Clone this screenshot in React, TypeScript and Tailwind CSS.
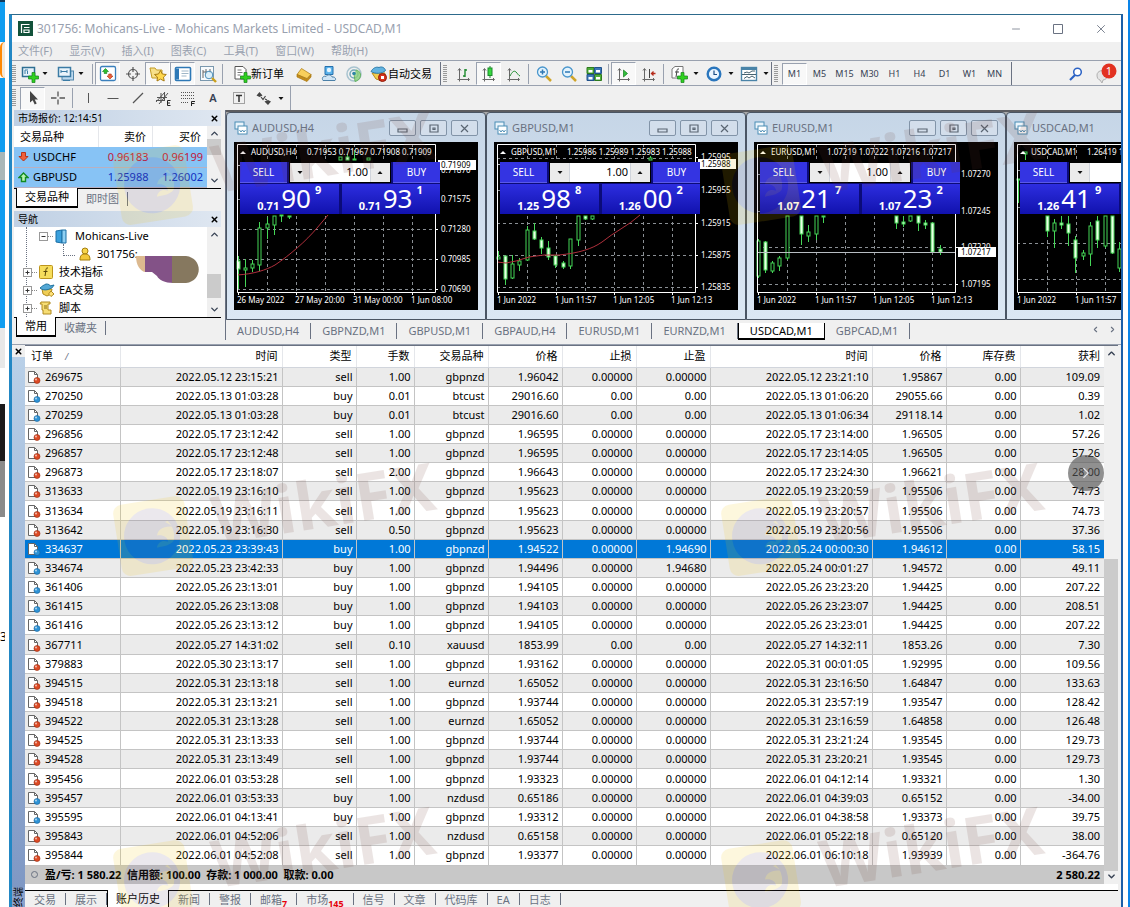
import type { ReactNode } from "react";
import { ChevronDown, ChevronLeft, ChevronRight, ChevronUp, Minus, Square, X } from "lucide-react";
import clsx from "clsx";

const menus = ["文件(F)", "显示(V)", "插入(I)", "图表(C)", "工具(T)", "窗口(W)", "帮助(H)"];
const periods = ["M1", "M5", "M15", "M30", "H1", "H4", "D1", "W1", "MN"];
const chartTabs = ["AUDUSD,H4", "GBPNZD,M1", "GBPUSD,M1", "GBPAUD,H4", "EURUSD,M1", "EURNZD,M1", "USDCAD,M1", "GBPCAD,M1"];

const terminalTabs: { name: string; count?: string }[] = [
  { name: "交易" },
  { name: "展示" },
  { name: "账户历史" },
  { name: "新闻" },
  { name: "警报" },
  { name: "邮箱", count: "7" },
  { name: "市场", count: "145" },
  { name: "信号" },
  { name: "文章" },
  { name: "代码库" },
  { name: "EA" },
  { name: "日志" },
];

const columns = ["订单", "时间", "类型", "手数", "交易品种", "价格", "止损", "止盈", "时间", "价格", "库存费", "获利"];

// order, open time, type, lots, symbol, price, s/l, t/p, close time, price, swap, profit
const orders = [
  ["269675", "2022.05.12 23:15:21", "sell", "1.00", "gbpnzd", "1.96042", "0.00000", "0.00000", "2022.05.12 23:21:10", "1.95867", "0.00", "109.09"],
  ["270250", "2022.05.13 01:03:28", "buy", "0.01", "btcust", "29016.60", "0.00", "0.00", "2022.05.13 01:06:20", "29055.66", "0.00", "0.39"],
  ["270259", "2022.05.13 01:03:28", "buy", "0.01", "btcust", "29016.60", "0.00", "0.00", "2022.05.13 01:06:34", "29118.14", "0.00", "1.02"],
  ["296856", "2022.05.17 23:12:42", "sell", "1.00", "gbpnzd", "1.96595", "0.00000", "0.00000", "2022.05.17 23:14:00", "1.96505", "0.00", "57.26"],
  ["296857", "2022.05.17 23:12:48", "sell", "1.00", "gbpnzd", "1.96595", "0.00000", "0.00000", "2022.05.17 23:14:05", "1.96505", "0.00", "57.26"],
  ["296873", "2022.05.17 23:18:07", "sell", "2.00", "gbpnzd", "1.96643", "0.00000", "0.00000", "2022.05.17 23:24:30", "1.96621", "0.00", "28.00"],
  ["313633", "2022.05.19 23:16:10", "sell", "1.00", "gbpnzd", "1.95623", "0.00000", "0.00000", "2022.05.19 23:20:59", "1.95506", "0.00", "74.73"],
  ["313634", "2022.05.19 23:16:11", "sell", "1.00", "gbpnzd", "1.95623", "0.00000", "0.00000", "2022.05.19 23:20:57", "1.95506", "0.00", "74.73"],
  ["313642", "2022.05.19 23:16:30", "sell", "0.50", "gbpnzd", "1.95623", "0.00000", "0.00000", "2022.05.19 23:20:56", "1.95506", "0.00", "37.36"],
  ["334637", "2022.05.23 23:39:43", "buy", "1.00", "gbpnzd", "1.94522", "0.00000", "1.94690", "2022.05.24 00:00:30", "1.94612", "0.00", "58.15"],
  ["334674", "2022.05.23 23:42:33", "buy", "1.00", "gbpnzd", "1.94496", "0.00000", "1.94680", "2022.05.24 00:01:27", "1.94572", "0.00", "49.11"],
  ["361406", "2022.05.26 23:13:01", "buy", "1.00", "gbpnzd", "1.94105", "0.00000", "0.00000", "2022.05.26 23:23:20", "1.94425", "0.00", "207.22"],
  ["361415", "2022.05.26 23:13:08", "buy", "1.00", "gbpnzd", "1.94103", "0.00000", "0.00000", "2022.05.26 23:23:07", "1.94425", "0.00", "208.51"],
  ["361416", "2022.05.26 23:13:12", "buy", "1.00", "gbpnzd", "1.94105", "0.00000", "0.00000", "2022.05.26 23:23:01", "1.94425", "0.00", "207.22"],
  ["367711", "2022.05.27 14:31:02", "sell", "0.10", "xauusd", "1853.99", "0.00", "0.00", "2022.05.27 14:32:11", "1853.26", "0.00", "7.30"],
  ["379883", "2022.05.30 23:13:17", "sell", "1.00", "gbpnzd", "1.93162", "0.00000", "0.00000", "2022.05.31 00:01:05", "1.92995", "0.00", "109.56"],
  ["394515", "2022.05.31 23:13:18", "sell", "1.00", "eurnzd", "1.65052", "0.00000", "0.00000", "2022.05.31 23:16:50", "1.64847", "0.00", "133.63"],
  ["394518", "2022.05.31 23:13:21", "sell", "1.00", "gbpnzd", "1.93744", "0.00000", "0.00000", "2022.05.31 23:57:19", "1.93547", "0.00", "128.42"],
  ["394522", "2022.05.31 23:13:28", "sell", "1.00", "eurnzd", "1.65052", "0.00000", "0.00000", "2022.05.31 23:16:59", "1.64858", "0.00", "126.48"],
  ["394525", "2022.05.31 23:13:33", "sell", "1.00", "gbpnzd", "1.93744", "0.00000", "0.00000", "2022.05.31 23:21:24", "1.93545", "0.00", "129.73"],
  ["394528", "2022.05.31 23:13:49", "sell", "1.00", "gbpnzd", "1.93744", "0.00000", "0.00000", "2022.05.31 23:20:21", "1.93545", "0.00", "129.73"],
  ["395456", "2022.06.01 03:53:28", "sell", "1.00", "gbpnzd", "1.93323", "0.00000", "0.00000", "2022.06.01 04:12:14", "1.93321", "0.00", "1.30"],
  ["395457", "2022.06.01 03:53:33", "buy", "1.00", "nzdusd", "0.65186", "0.00000", "0.00000", "2022.06.01 04:39:03", "0.65152", "0.00", "-34.00"],
  ["395595", "2022.06.01 04:13:41", "buy", "1.00", "gbpnzd", "1.93312", "0.00000", "0.00000", "2022.06.01 04:38:58", "1.93373", "0.00", "39.75"],
  ["395843", "2022.06.01 04:52:06", "sell", "1.00", "nzdusd", "0.65158", "0.00000", "0.00000", "2022.06.01 05:22:18", "0.65120", "0.00", "38.00"],
  ["395844", "2022.06.01 04:52:08", "sell", "1.00", "gbpnzd", "1.93377", "0.00000", "0.00000", "2022.06.01 06:10:18", "1.93939", "0.00", "-364.76"],
];

// x, high, low, body top, body bottom, filled
type Candle = [number, number, number, number, number, boolean];

type Chart = {
  name: string;
  quotes: string;
  sell: [string, string, string];
  buy: [string, string, string];
  grid: number[];
  labels: [number, string][];
  dates: string[];
  last?: [number, string];
  ma?: string;
  candles: Candle[];
};

const charts: Chart[] = [
  {
    name: "AUDUSD,H4",
    quotes: "0.71953 0.71967 0.71908 0.71909",
    sell: ["0.71", "90", "9"],
    buy: ["0.71", "93", "1"],
    grid: [57, 87, 117, 147],
    labels: [[28, "0.71870"], [57, "0.71575"], [87, "0.71280"], [117, "0.70985"], [147, "0.70690"]],
    dates: ["26 May 2022", "27 May 20:00", "31 May 00:00", "1 Jun 08:00"],
    last: [23, "0.71909"],
    ma: "M3 133C20 132 32 128 41 123C56 113 72 99 83 86L94 73",
    candles: [
      [4, 114, 147, 119, 127, true],
      [11, 117, 145, 126, 128, false],
      [18, 118, 130, 122, 126, false],
      [25, 80, 129, 86, 123, false],
      [33, 75, 97, 82, 86, false],
      [40, 74, 93, 74, 83, false],
      [47, 74, 80, 73, 74, false],
      [55, 74, 77, 74, 75, false],
      [106, 15, 18, 15, 18, false],
      [113, 12, 18, 15, 18, true],
      [120, 9, 18, 17, 18, false],
      [134, 16, 18, 16, 18, false],
    ],
  },
  {
    name: "GBPUSD,M1",
    quotes: "1.25986 1.25989 1.25983 1.25988",
    sell: ["1.25", "98", "8"],
    buy: ["1.26", "00", "2"],
    grid: [16, 48, 81, 113, 145],
    labels: [[15, "1.25995"], [48, "1.25955"], [81, "1.25915"], [113, "1.25875"], [145, "1.25835"]],
    dates: ["1 Jun 2022", "1 Jun 11:57", "1 Jun 12:05", "1 Jun 12:13"],
    last: [22, "1.25988"],
    ma: "M3 120L12 121L22 119L35 115L50 113L65 113C85 111 98 107 108 100C120 90 134 84 146 73",
    candles: [
      [4, 109, 117, 115, 117, false],
      [11, 114, 143, 114, 137, true],
      [18, 113, 137, 122, 136, false],
      [25, 116, 129, 119, 123, false],
      [33, 84, 119, 88, 118, false],
      [40, 81, 98, 89, 97, true],
      [47, 95, 112, 98, 106, true],
      [54, 99, 118, 106, 115, true],
      [61, 113, 126, 114, 123, true],
      [69, 119, 127, 121, 125, true],
      [76, 97, 127, 97, 124, false],
      [84, 74, 104, 74, 98, false],
      [91, 74, 78, 74, 77, true],
      [98, 74, 78, 74, 77, false],
      [156, 14, 18, 16, 18, false],
    ],
  },
  {
    name: "EURUSD,M1",
    quotes: "1.07219 1.07222 1.07216 1.07217",
    sell: ["1.07", "21", "7"],
    buy: ["1.07", "23", "2"],
    grid: [32, 69, 105, 142],
    labels: [[32, "1.07270"], [69, "1.07245"], [105, "1.07220"], [142, "1.07195"]],
    dates: ["1 Jun 2022", "1 Jun 11:57", "1 Jun 12:05", "1 Jun 12:13"],
    last: [110, "1.07217"],
    candles: [
      [4, 97, 136, 99, 134, false],
      [11, 99, 131, 100, 128, true],
      [18, 119, 131, 121, 129, false],
      [25, 114, 129, 116, 124, false],
      [33, 74, 118, 74, 116, false],
      [47, 74, 103, 74, 92, true],
      [54, 83, 100, 90, 94, false],
      [62, 74, 98, 74, 92, false],
      [69, 74, 81, 74, 75, false],
      [142, 74, 87, 74, 81, true],
      [149, 74, 85, 80, 82, true],
      [156, 74, 80, 74, 79, false],
      [164, 74, 89, 74, 81, true],
      [171, 78, 87, 81, 83, true],
      [178, 80, 110, 81, 110, true],
      [186, 103, 113, 107, 110, true],
    ],
  },
  {
    name: "USDCAD,M1",
    quotes: "1.26419 1.26421 1.26417 1.26419",
    sell: ["1.26", "41", "9"],
    buy: ["1.26", "44", "1"],
    grid: [28, 65, 101, 137],
    labels: [[28, "1.26440"], [65, "1.26425"], [101, "1.26410"], [137, "1.26395"]],
    dates: ["1 Jun 2022", "1 Jun 11:57", "1 Jun 12:05", "1 Jun 12:13"],
    candles: [
      [4, 37, 61, 37, 38, false],
      [11, 10, 18, 10, 12, false],
      [33, 74, 95, 74, 89, true],
      [40, 77, 106, 81, 89, false],
      [47, 74, 87, 81, 83, true],
      [54, 74, 104, 82, 91, true],
      [61, 94, 131, 98, 116, true],
      [69, 108, 118, 111, 114, false],
      [76, 80, 124, 84, 112, false],
      [83, 74, 106, 79, 98, true],
      [91, 74, 106, 74, 104, false],
      [98, 74, 112, 74, 111, true],
      [105, 100, 130, 107, 126, false],
    ],
  },
];

function Icon({ children }: { children: ReactNode }) {
  return (
    <svg width="18" height="18" viewBox="0 0 18 18" fill="none" aria-hidden="true">
      {children}
    </svg>
  );
}

const plus = <path d="M11 7.500h3v3.500h3.500v3h-3.500v3.500h-3v-3.500h-3.500v-3h3.500z" fill="#2fd01f" stroke="#13801a" strokeWidth=".7" />;
const axes = <path d="M4.500 4v10.500H14M2.500 14.500h2v2M3 5.500l1.500-2 1.500 2M13 13l1.500 1.500L13 16" stroke="#666" />;

const icons = {
  addChart: (
    <Icon>
      <rect x="1.500" y="2.500" width="12" height="9" fill="#e8f3fb" stroke="#2f6f93" strokeWidth="1.500" />
      <path d="M4 5v4M6.500 6v3M4 5h3" stroke="#3a7fa6" />
      {plus}
    </Icon>
  ),
  profiles: (
    <Icon>
      <rect x="5" y="6" width="11.500" height="9" fill="#bcd8ee" stroke="#5387ab" />
      <rect x="1.500" y="2.500" width="12" height="9" fill="#eaf4fb" stroke="#3b7ba5" strokeWidth="1.500" />
      <path d="M4 5v3M4 6.500h6M10 5v3M6 15.500h7" stroke="#3b7ba5" />
    </Icon>
  ),
  market: (
    <Icon>
      <rect x="1.500" y="1.500" width="15" height="14" rx="1.500" fill="#fff" stroke="#3a80bd" strokeWidth="1.300" />
      <path d="M6.500 3.500l3 3h-1.700v2H5.200v-2H3.500z" fill="#2bc02b" stroke="#13801a" strokeWidth=".6" />
      <path d="M11 14l-3-3h1.700V9h2.600v2H14z" fill="#f0603a" stroke="#a83213" strokeWidth=".6" />
    </Icon>
  ),
  crosshair: (
    <Icon>
      <circle cx="9" cy="9" r="4.500" stroke="#555" strokeWidth="1.200" />
      <path d="M9 2v5M9 11v5M2 9h5M11 9h5" stroke="#555" strokeWidth="1.200" />
    </Icon>
  ),
  navigator: (
    <Icon>
      <path d="M1 3h5l1.500 2H13v8H3z" fill="#f7e08a" stroke="#c29b25" />
      <path d="M11.500 5.500l1.800 3.500 4 .5-2.800 2.600.7 3.900-3.700-1.900-3.500 1.900.5-3.900L5.500 9.500l4-.5z" fill="#ffd84d" stroke="#a87b11" />
    </Icon>
  ),
  list: (
    <Icon>
      <rect x="1.500" y="2.500" width="15" height="13" rx="1" fill="#fff" stroke="#2d78b6" strokeWidth="1.600" />
      <path d="M2 3.500h3v11H2z" fill="#2d78b6" />
      <path d="M7.500 6h7M7.500 8.500h7M7.500 11h5" stroke="#9fb6c8" />
    </Icon>
  ),
  tester: (
    <Icon>
      <rect x="1.500" y="1.500" width="13" height="14" fill="#f7fafc" stroke="#7a98ae" />
      <path d="M4 13V5M7 9V4M4 7h4M11 8V4" stroke="#666" />
      <circle cx="10" cy="10" r="3.800" fill="#d5edf9" fillOpacity=".8" stroke="#4a8db8" />
      <path d="M13 13l4 4" stroke="#caa01c" strokeWidth="2.400" />
    </Icon>
  ),
  newOrder: (
    <Icon>
      <path d="M2 1.500h8l3 3V14H2z" fill="#fff" stroke="#555" />
      <path d="M4.500 5h4M4.500 7.500h5M4.500 10h3" stroke="#777" />
      {plus}
    </Icon>
  ),
  gold: (
    <Icon>
      <path d="M2 9.500L6.500 3.500l9.500 6-4 4z" fill="#f8cf5c" stroke="#a7770f" strokeWidth=".7" />
      <path d="M2 9.500l10 4.500 4-4.500v2.500l-4 4.500-10-4.500z" fill="#c48c1b" stroke="#a7770f" strokeWidth=".7" />
    </Icon>
  ),
  community: (
    <Icon>
      <path d="M5 1.500h8v8H5z" fill="#5bb2ea" stroke="#2571ae" />
      <circle cx="9" cy="5" r="2.200" fill="#e6f5ff" />
      <path d="M3 15.500c-2-3 1-5 3-4 1.500-2.500 5.500-2 6 .5 3-.5 4.500 2 3 3.500z" fill="#cfe4f4" stroke="#4b80a8" />
    </Icon>
  ),
  signals: (
    <Icon>
      <circle cx="9" cy="9" r="7" stroke="#a8c3cf" strokeWidth="1.500" />
      <circle cx="9" cy="9" r="4" stroke="#73a9b8" strokeWidth="1.500" />
      <path d="M9 9l1 7.500c4-1 6-4 5.500-7.500-1-3-3-4-4.500-4" fill="#8ad17a" fillOpacity=".8" stroke="#4da746" strokeWidth=".7" />
      <circle cx="9" cy="8.500" r="1.800" fill="#2e86a5" />
    </Icon>
  ),
  auto: (
    <Icon>
      <path d="M2 8h13l-3 8-6-2z" fill="#f3cc4d" stroke="#b58c1b" />
      <path d="M1 6.500C3 3 6 1.500 9 2.500c3-1.500 6 .5 6.500 3C12 9 5 9 1 6.500z" fill="#62b3e0" stroke="#2a7bab" />
      <circle cx="12.500" cy="12.500" r="4" fill="#d6321c" stroke="#8f1c0d" />
      <rect x="11" y="11" width="3" height="3" fill="#fff" />
    </Icon>
  ),
  bars: (
    <Icon>
      {axes}
      <path d="M10 4v8M8 11h2M10 5h2" stroke="#1d8a2d" strokeWidth="1.400" />
    </Icon>
  ),
  candles: (
    <Icon>
      {axes}
      <path d="M10 1v12" stroke="#1d8a2d" />
      <rect x="8" y="3" width="4" height="7.500" fill="#37d83e" stroke="#1d8a2d" />
    </Icon>
  ),
  line: (
    <Icon>
      {axes}
      <path d="M5 11C7 7 9 5 11 7s2 3 4 4" stroke="#1d8a2d" />
    </Icon>
  ),
  zoomIn: (
    <Icon>
      <path d="M11 11l5 5" stroke="#d0a52a" strokeWidth="2.500" />
      <circle cx="7.500" cy="7" r="5" fill="#e3f3fd" stroke="#4a96cc" strokeWidth="1.300" />
      <path d="M7.500 4.500v5M5 7h5" stroke="#2e78b5" strokeWidth="1.500" />
    </Icon>
  ),
  zoomOut: (
    <Icon>
      <path d="M11 11l5 5" stroke="#d0a52a" strokeWidth="2.500" />
      <circle cx="7.500" cy="7" r="5" fill="#e3f3fd" stroke="#4a96cc" strokeWidth="1.300" />
      <path d="M5 7h5" stroke="#2e78b5" strokeWidth="1.500" />
    </Icon>
  ),
  tile: (
    <Icon>
      <path d="M2 2.500h7v6H2zM9.500 9.500h7v6h-7z" fill="#4fae3b" stroke="#2c7a1e" />
      <path d="M9.500 2.500h7v6h-7zM2 9.500h7v6H2z" fill="#3c78b8" stroke="#20518a" />
      <path d="M3.500 5h4v2.500h-4zM11 5h4v2.500h-4zM3.500 12h4v2.500h-4zM11 12h4v2.500h-4z" fill="#fff" />
    </Icon>
  ),
  scroll: (
    <Icon>
      {axes}
      <path d="M8.500 5l4 3.500-4 3.500z" fill="#2fbf3a" stroke="#137a1c" strokeWidth=".7" />
    </Icon>
  ),
  shift: (
    <Icon>
      {axes}
      <path d="M9.500 4v9" stroke="#444" />
      <path d="M15.500 8.500h-4M13.500 6.500l-2 2 2 2" stroke="#b52a1a" strokeWidth="1.300" />
    </Icon>
  ),
  indicators: (
    <Icon>
      <path d="M2 4l3-2.500h8V13H2z" fill="#fff" stroke="#777" />
      <path d="M9 4c-2-.5-2 1-2.200 3L6 12M5 7h4" stroke="#444" />
      {plus}
    </Icon>
  ),
  clock: (
    <Icon>
      <circle cx="9" cy="9" r="6.300" fill="#eaf5ff" stroke="#2a76bd" strokeWidth="2.400" />
      <path d="M9 5.500v4h3" stroke="#1a4d85" strokeWidth="1.200" />
    </Icon>
  ),
  template: (
    <Icon>
      <rect x="1.500" y="2.500" width="15" height="13" fill="#fff" stroke="#4a84a8" strokeWidth="1.400" />
      <path d="M2 4h14" stroke="#4a84a8" strokeWidth="2" />
      <path d="M4 8l3-1 2 1 3-2h3M4 13.500l3-2 2 1.500 3-2 3 2M2 9.500h14" stroke="#45616f" />
    </Icon>
  ),
  cursor: (
    <Icon>
      <path d="M6 2v11.500l2.700-2.300 2 4.300 2-1-2-4H14z" fill="#444" />
    </Icon>
  ),
  cross: (
    <Icon>
      <path d="M9 2.500v5M9 10.500v5M2 9h5.500M10.500 9H16" stroke="#555" strokeWidth="1.300" />
    </Icon>
  ),
  vline: (
    <Icon>
      <path d="M9.500 4v10" stroke="#555" />
    </Icon>
  ),
  hline: (
    <Icon>
      <path d="M3.500 9.500h11" stroke="#555" />
    </Icon>
  ),
  trend: (
    <Icon>
      <path d="M4 14L14 4" stroke="#555" strokeWidth="1.200" />
    </Icon>
  ),
  channel: (
    <Icon>
      <path d="M2 13L11 3M5 15l9-11M3 8.500h10M2 11.500h9M7 4v10M10.500 3v8" stroke="#555" />
      <path d="M16.500 11.500h-3v5h3M13.500 14h2.500" stroke="#222" />
    </Icon>
  ),
  fibo: (
    <Icon>
      <path d="M2 3.500h13M2 6.500h13M2 9.500h13M2 13.500h8" stroke="#555" strokeDasharray="1 1" />
      <path d="M16 12.500h-3.500V17M12.500 14.500h3" stroke="#222" />
    </Icon>
  ),
  label: (
    <Icon>
      <rect x="3.500" y="3.500" width="11" height="11" stroke="#555" strokeDasharray="1 1" />
      <path d="M6 6.500h6M9 6.500V13" stroke="#333" strokeWidth="1.500" />
    </Icon>
  ),
  arrows: (
    <Icon>
      <path d="M1.500 6.500l3-3.500 3 3.500-3 1.500zM9.500 12.500l3.500-1.500 3 1.500-3 3.500z" fill="#444" />
      <path d="M6 8l2 2.500 2.500-3.500M10 10l2 1" stroke="#444" strokeWidth="1.200" />
    </Icon>
  ),
};

function Tool({ name, pressed, narrow }: { name: keyof typeof icons; pressed?: boolean; narrow?: boolean }) {
  return (
    <button
      type="button"
      aria-label={name}
      className={clsx(
        "flex h-[23px] shrink-0 items-center justify-center",
        narrow ? "w-5" : "w-[25px]",
        pressed && "border border-r-white border-b-white border-t-gray-400 border-l-gray-400 bg-[#f8f8f8]"
      )}
    >
      {icons[name]}
    </button>
  );
}

function Caret() {
  return (
    <svg width="10" height="5" viewBox="0 0 10 5" className="shrink-0" aria-hidden="true">
      <path d="M2.500 1h5L5 4z" fill="#111" />
    </svg>
  );
}

function Divider() {
  return <div className="mx-0.5 h-5 w-px shrink-0 bg-gray-400" />;
}

function Grip() {
  return <div className="mr-1 h-[18px] w-1 shrink-0 bg-[repeating-linear-gradient(#9a9a9a_0_1px,#f0f0f0_1px_2px)]" />;
}

function CloseButton() {
  return (
    <button type="button" aria-label="关闭" className="text-black">
      <X size={9} strokeWidth={4} />
    </button>
  );
}

function Toolbars() {
  return (
    <div className="bg-[#f0f0f0]">
      <div className="flex h-[25px] items-center border-b border-gray-400 pt-px">
        <div className="flex h-full shrink-0 items-center border-r border-gray-500 pr-2">
          <Grip />
          <Tool name="addChart" narrow />
          <Caret />
          <div className="w-1.5" />
          <Tool name="profiles" narrow />
          <Caret />
          <div className="w-1" />
          <Divider />
          <Tool name="market" pressed />
          <Tool name="crosshair" />
          <Tool name="navigator" pressed />
          <Tool name="list" pressed />
          <Tool name="tester" />
          <Divider />
          <button type="button" className="ml-2 flex w-[58px] shrink-0 items-center text-[11px] leading-4">
            {icons.newOrder}
            新订单
          </button>
          <Tool name="gold" />
          <Tool name="community" />
          <Tool name="signals" />
          <button type="button" className="ml-1 flex shrink-0 items-center text-[11px] leading-4">
            {icons.auto}
            自动交易
          </button>
        </div>
        <div className="flex h-full shrink-0 items-center border-r border-gray-500 pl-0.5">
          <Grip />
          <Tool name="bars" />
          <Tool name="candles" pressed />
          <Tool name="line" />
          <Divider />
          <Tool name="zoomIn" />
          <Tool name="zoomOut" />
          <Tool name="tile" />
          <Divider />
          <Tool name="scroll" pressed />
          <Tool name="shift" />
          <Divider />
          <Tool name="indicators" />
          <Caret />
          <Tool name="clock" />
          <Caret />
          <Tool name="template" />
          <Caret />
        </div>
        <div className="flex h-full shrink-0 items-center border-r border-gray-500 pr-1 pl-0.5">
          <Grip />
          {periods.map((p) => (
            <button
              key={p}
              type="button"
              className={clsx(
                "h-[22px] w-[25px] text-[9px] text-gray-700",
                p === "M1" && "border border-r-white border-b-white border-t-gray-400 border-l-gray-400 bg-[#f8f8f8]"
              )}
            >
              {p}
            </button>
          ))}
        </div>
        <div className="ml-auto flex items-center gap-3 pr-1">
          <button type="button" aria-label="搜索">
            <svg width="14" height="14" viewBox="0 0 14 14" fill="none">
              <circle cx="8.500" cy="5" r="3.800" fill="#fff" stroke="#2b62c4" strokeWidth="1.500" />
              <path d="M6 8l-5 5" stroke="#2b62c4" strokeWidth="2.200" />
            </svg>
          </button>
          <button type="button" aria-label="消息" className="flex">
            <svg width="22" height="22" viewBox="0 0 22 22">
              <path d="M2 12c0-4 6-6 9-3s2 7-3 8l-1 3-2-3c-2-.5-3-2-3-5z" fill="#e5e5e5" stroke="#b0b0b0" />
              <circle cx="14" cy="8" r="7.500" fill="#e23222" />
              <text x="14" y="12" fontSize="11" textAnchor="middle" fill="#fff">1</text>
            </svg>
          </button>
        </div>
      </div>
      <div className="flex h-6 items-center">
        <div className="flex h-full items-center border-r border-gray-400 pr-1">
          <Grip />
          <Tool name="cursor" pressed />
          <Tool name="cross" />
          <Divider />
          <Tool name="vline" />
          <Tool name="hline" />
          <Tool name="trend" />
          <Tool name="channel" />
          <Tool name="fibo" />
          <button type="button" className="w-[26px] text-[11px] font-semibold text-gray-700">A</button>
          <Tool name="label" />
          <Tool name="arrows" />
          <Caret />
        </div>
      </div>
    </div>
  );
}

function ScrollBar({ thumb }: { thumb: string }) {
  return (
    <div className="flex w-[14px] shrink-0 flex-col items-center justify-between bg-[#f0f0f0] py-0.5 text-gray-700">
      <ChevronUp size={11} strokeWidth={3} />
      <div className={clsx("w-full bg-[#cbcbcb]", thumb)} />
      <ChevronDown size={11} strokeWidth={3} />
    </div>
  );
}

function MarketWatch() {
  const rows = [
    { symbol: "USDCHF", bid: "0.96183", ask: "0.96199", up: false },
    { symbol: "GBPUSD", bid: "1.25988", ask: "1.26002", up: true },
  ];
  return (
    <section>
      <div className="flex h-4 items-center justify-between bg-gradient-to-r from-[#bfd0e4] to-[#dfe7f1] pr-0.5 pl-1 text-[10px] leading-4">
        市场报价: 12:14:51
        <CloseButton />
      </div>
      <div className="flex bg-white">
        <table className="flex-1 table-fixed text-[11px] leading-4">
          <thead>
            <tr className="h-[21px]">
              <th className="w-[84px] pl-1.5 text-left font-normal">交易品种</th>
              <th className="border-l border-gray-200 pr-1.5 text-right font-normal">卖价</th>
              <th className="border-l border-gray-200 pr-1.5 text-right font-normal">买价</th>
            </tr>
          </thead>
          <tbody>
            {rows.map((r) => (
              <tr key={r.symbol} className="h-[19px] border-b border-[#b9b0c0] bg-[#87c3f5]">
                <td className="pl-1">
                  <span className="flex items-center gap-1">
                    <svg width="11" height="11" viewBox="0 0 11 11">
                      {r.up ? (
                        <path d="M5.500 1L10 5.500H7.500V9.500h-4v-4H1z" fill="#b9f5b0" stroke="#128a22" strokeWidth="1.400" />
                      ) : (
                        <path d="M5.500 10L10 5.500H7.500v-4h-4v4H1z" fill="#f0603a" stroke="#b8341a" />
                      )}
                    </svg>
                    {r.symbol}
                  </span>
                </td>
                <td className={clsx("pr-1 text-right", r.up ? "text-[#1030c0]" : "text-[#c01840]")}>{r.bid}</td>
                <td className={clsx("pr-1 text-right", r.up ? "text-[#1030c0]" : "text-[#c01840]")}>{r.ask}</td>
              </tr>
            ))}
          </tbody>
        </table>
        <ScrollBar thumb="mb-5 h-4" />
      </div>
      <PanelTabs active="交易品种" other="即时图" />
    </section>
  );
}

function PanelTabs({ active, other }: { active: string; other: string }) {
  return (
    <div className="flex h-5 text-[11px] leading-4">
      <div className="w-0.5 border-t border-black" />
      <button type="button" className="border-x border-b-2 border-black bg-white px-2">{active}</button>
      <div className="flex-1 border-t border-black pt-0.5 text-gray-500">
        <button type="button" className="border-r border-gray-500 px-2 leading-[14px]">{other}</button>
      </div>
    </div>
  );
}

function Navigator() {
  const items = [
    {
      name: "技术指标",
      icon: (
        <svg width="14" height="14" viewBox="0 0 14 14" fill="none">
          <rect x=".5" y=".5" width="13" height="13" rx="1" fill="#f6dd5c" stroke="#bd951c" />
          <path d="M9 3c-2-.5-2 1-2.200 3L6 11M4.500 6.500h4" stroke="#5b4708" />
        </svg>
      ),
    },
    {
      name: "EA交易",
      icon: (
        <svg width="16" height="14" viewBox="0 0 16 14">
          <path d="M3 6h10l-1 5-4 2-4-2z" fill="#f0ce55" stroke="#b08a20" />
          <path d="M1 5c2-2 4-3 6-4 3 0 4 1 4 2l4-1c-1 4-10 7-14 3z" fill="#53a8d6" stroke="#20739f" />
          <path d="M12 8l3 3-3 2.500L9.500 11z" fill="#ffe27a" stroke="#b08a20" />
        </svg>
      ),
    },
    {
      name: "脚本",
      icon: (
        <svg width="14" height="14" viewBox="0 0 14 14">
          <path d="M2 1h9v2H9v6h3v4H4V9H3V3H1z" fill="#f6dd74" stroke="#b08a20" />
          <path d="M5 5h3M5 7h3" stroke="#8b6c12" />
        </svg>
      ),
    },
  ];
  return (
    <section>
      <div className="flex h-4 items-center justify-between bg-gradient-to-r from-[#bfd0e4] to-[#dfe7f1] pr-0.5 pl-1 text-[10px] leading-4">
        导航
        <CloseButton />
      </div>
      <div className="flex h-[90px] bg-white">
        <ul className="relative ml-3 flex-1 border-l border-dotted border-gray-500 text-[11px] leading-[18px]">
          <li className="flex items-center gap-0.5 pl-4">
            <Toggle open />
            <svg width="12" height="15" viewBox="0 0 12 15">
              <path d="M1 2l6-1v13l-6-1z" fill="#3aa0dc" stroke="#1b6ea5" />
              <path d="M7 1h4v13H7z" fill="#8fd0f3" stroke="#1b6ea5" />
            </svg>
            <span className="pl-1.5">Mohicans-Live</span>
          </li>
          <li className="flex items-center gap-1 pl-9">
            <span className="h-3 w-3 -translate-y-1 border-b border-l border-dotted border-gray-500" />
            <svg width="12" height="14" viewBox="0 0 12 14">
              <circle cx="6" cy="4" r="3" fill="#f7d64d" stroke="#a57e0d" />
              <path d="M1 13c0-5 2-6 5-6s5 1 5 6z" fill="#f2c838" stroke="#a57e0d" />
            </svg>
            <span className="pl-0.5">301756:</span>
          </li>
          {items.map((item) => (
            <li key={item.name} className="flex items-center gap-0.5">
              <Toggle />
              <span className="flex w-[18px] items-center">{item.icon}</span>
              {item.name}
            </li>
          ))}
          <li className="absolute top-7 left-[109px]">
            <svg width="63" height="29" viewBox="0 0 63 29">
              <path d="M0 1h9v16C4 16 0 10 0 1z" fill="#dcb98f" />
              <path d="M9 1h28v27c-8 0-14-3-16-7l-5-4H9z" fill="#835287" />
              <path d="M36 1h14c17 2 17 25 0 27H36z" fill="#86785f" />
            </svg>
          </li>
        </ul>
        <ScrollBar thumb="mt-7 h-6" />
      </div>
      <PanelTabs active="常用" other="收藏夹" />
    </section>
  );
}

function Toggle({ open }: { open?: boolean }) {
  return (
    <svg width="14" height="9" viewBox="0 0 14 9" fill="none" className="-ml-1 shrink-0">
      <rect x=".5" y=".5" width="8" height="8" fill="#fff" stroke="#999" />
      <path d={open ? "M2.500 4.500h4" : "M2.500 4.500h4M4.500 2.500v4"} stroke="#333" />
      <path d="M9 4.500h5" stroke="#888" strokeDasharray="1 1" />
    </svg>
  );
}

function Price({ value }: { value: [string, string, string] }) {
  return (
    <button
      type="button"
      className="flex flex-1 justify-center gap-0.5 bg-gradient-to-b from-[#2d2de0] to-[#1111ae] text-white"
    >
      <span className="self-end text-[11px] leading-4 font-bold">{value[0]}</span>
      <span className="text-[26px] leading-7">{value[1]}</span>
      <span className="pl-0.5 text-[11px] leading-3 font-bold">{value[2]}</span>
    </button>
  );
}

function ChartWindow({ chart }: { chart: Chart }) {
  return (
    <article className="w-[260px] shrink-0 rounded-t border border-[#4a5564] bg-gradient-to-b from-[#c6d6e7] to-[#dbe7f4] px-[7px] pb-2">
      <header className="flex h-[29px] items-center gap-1 pt-px text-[11px] text-gray-500">
        <svg width="14" height="14" viewBox="0 0 14 14" fill="none">
          <rect x="1" y="1" width="9" height="7" fill="#eaf4fb" stroke="#4b8db5" />
          <rect x="4" y="5" width="9" height="8" fill="#fff" stroke="#4b8db5" />
          <path d="M5.500 9l1.500 2 1.500-2 1.500 2 1.500-2" stroke="#4b8db5" />
        </svg>
        <h2 className="flex-1">{chart.name}</h2>
        {["M8 8h9v3H8z", "M9 4h8v7H9zM12 7h2v1.500h-2z", "M9 4l7 7M16 4l-7 7"].map((d) => (
          <button key={d} type="button" aria-label="窗口" className="flex h-4 w-[27px] items-center justify-center rounded-[2px] border border-[#8294a8] bg-[#d3deeb]">
            <svg width="25" height="15" viewBox="0 0 25 15" fill="none">
              <path d={d} stroke="#5a6572" strokeWidth="1.200" />
            </svg>
          </button>
        ))}
      </header>
      <div className="relative">
        <ChartCanvas chart={chart} />
        <div className="absolute top-5 left-1.5 w-[200px] bg-[#0b0b78]">
          <div className="flex h-[21px] gap-0.5 text-white">
            <button type="button" className="w-[47px] border-b border-[#5a5ae8] bg-[#3434e2] text-[10px]">SELL</button>
            <div className="flex flex-1 border border-black bg-white">
              <button type="button" aria-label="减少" className="flex w-[19px] items-center justify-center bg-[#ebebeb]">
                <Caret />
              </button>
              <input
                aria-label={chart.name + " 手数"}
                defaultValue="1.00"
                className="w-0 flex-1 border-x border-gray-300 bg-white pr-0.5 text-right text-[11px] text-black"
              />
              <button type="button" aria-label="增加" className="flex w-[19px] rotate-180 items-center justify-center bg-[#ebebeb]">
                <Caret />
              </button>
            </div>
            <button type="button" className="w-[47px] border-b border-[#5a5ae8] bg-[#3434e2] text-[10px]">BUY</button>
          </div>
          <div className="flex h-[31px] gap-[3px] pt-px">
            <Price value={chart.sell} />
            <Price value={chart.buy} />
          </div>
        </div>
      </div>
    </article>
  );
}

function ChartCanvas({ chart }: { chart: Chart }) {
  return (
    <svg width="244" height="168" viewBox="0 0 244 168" fill="none" className="block" fontSize="8">
      <rect width="244" height="168" fill="#000" />
      {[33, 62, 91, 120, 149, 178].map((x) => (
        <path key={x} d={`M${x}.5 2V150`} stroke="#8a8f94" strokeDasharray="3 3" />
      ))}
      {chart.grid.map((y) => (
        <path key={y} d={`M3 ${y}.5H201`} stroke="#8a8f94" strokeDasharray="3 3" />
      ))}
      {chart.candles.map(([x, high, low, top, bottom, filled]) => (
        <g key={x} stroke="#45d657">
          <path d={`M${x}.5 ${high}V${low}`} />
          <rect x={x - 1} y={top} width="3" height={bottom - top} fill={filled ? "#e9ffe4" : "#000"} />
        </g>
      ))}
      {chart.ma && <path d={chart.ma} stroke="#b0303c" />}
      {chart.last && <path d={`M3 ${chart.last[0]}.5H201`} stroke="#b8bdc2" />}
      <path d="M3.500 2.500H201.500V150.500H3.500zM4.500 150v3M62.500 150v3M120.500 150v3M178.500 150v3" stroke="#fff" />
      {chart.labels.map(([y, label]) => (
        <g key={label}>
          <path d={`M201 ${y}.5h3`} stroke="#fff" />
          <text x="207" y={y + 3} fill="#fff">{label}</text>
        </g>
      ))}
      {chart.last && (
        <g>
          <rect x="204" y={chart.last[0] - 5} width="38" height="10" fill="#fff" />
          <text x="207" y={chart.last[0] + 3} fill="#000">{chart.last[1]}</text>
        </g>
      )}
      {chart.dates.map((date, i) => (
        <text key={date} x={3 + i * 58} y="161" fill="#fff">{date}</text>
      ))}
      <path d="M6 12l3-3 3 3z" fill="#fff" />
      <text x="17" y="13" fill="#fff">{chart.name}</text>
      <text x="73" y="13" fill="#fff">{chart.quotes}</text>
    </svg>
  );
}

function OrderIcon({ type }: { type: string }) {
  return (
    <svg width="14" height="14" viewBox="0 0 14 14" className="shrink-0">
      <path d="M1.500 1.500h6l3 3v8h-9z" fill="#fff" stroke="#666" />
      <path d="M7.500 1.500v3h3" fill="none" stroke="#666" />
      <circle cx="10" cy="10.500" r="3" fill={type === "buy" ? "#2e93d6" : "#dd4a24"} stroke={type === "buy" ? "#18639a" : "#96280e"} strokeWidth=".6" />
      <circle cx="9" cy="9.500" r=".9" fill="#fff" fillOpacity=".7" />
    </svg>
  );
}

function History() {
  return (
    <table className="h-full flex-1 table-fixed text-[11px] leading-4">
      <colgroup>
        <col className="w-[95px]" />
        <col className="w-[162px]" />
        <col className="w-[74px]" />
        <col className="w-[58px]" />
        <col className="w-[74px]" />
        <col className="w-[74px]" />
        <col className="w-[74px]" />
        <col className="w-[74px]" />
        <col className="w-[162px]" />
        <col className="w-[74px]" />
        <col className="w-[74px]" />
        <col />
      </colgroup>
      <thead>
        <tr className="h-[21px] bg-white">
          {columns.map((name, i) => (
            <th key={i} className={clsx("border-b border-gray-300 font-normal", i === 0 ? "pl-1.5 text-left" : "border-l border-l-gray-200 pr-1 text-right")}>
              {name}
              {i === 0 && <span className="pl-3 text-[9px] text-gray-500 italic">/</span>}
            </th>
          ))}
        </tr>
      </thead>
      <tbody>
        {orders.map((order, row) => (
          <tr
            key={order[0]}
            className={clsx("h-[19px] border-b border-[#c4c4c4]", row === 9 ? "bg-[#0078d7] text-white" : row % 2 ? "bg-white" : "bg-[#ebebeb]")}
          >
            {order.map((cell, i) =>
              i === 0 ? (
                <td key={i} className="pl-0.5">
                  <span className="flex items-center gap-1">
                    <OrderIcon type={order[2]} />
                    {cell}
                  </span>
                </td>
              ) : (
                <td key={i} className={clsx("border-l border-[#c4c4c4] text-right", i === 11 ? "pr-1" : "pr-[3px]")}>{cell}</td>
              )
            )}
          </tr>
        ))}
      </tbody>
      <tfoot>
        <tr className="h-[19px] bg-[#c8c8c8] font-bold">
          <td colSpan={11} className="pl-1.5">
            <span className="flex items-center gap-1.5">
              <span className="h-[7px] w-[7px] rounded-full border border-gray-500" />
              <span className="pl-px whitespace-pre">盈/亏: 1 580.22  信用额: 100.00  存款: 1 000.00  取款: 0.00</span>
            </span>
          </td>
          <td className="pr-1 text-right">2 580.22</td>
        </tr>
      </tfoot>
    </table>
  );
}

function Terminal() {
  return (
    <section className="flex min-h-0 flex-1 border-t border-gray-400 bg-[#f0f0f0]">
      <div className="flex w-[13px] shrink-0 flex-col items-center">
        <div className="flex h-3 items-center">
          <CloseButton />
        </div>
        <div className="w-full flex-1 bg-gradient-to-b from-[#b9d0e8] to-[#7f98c4]" />
        <div className="h-5 w-full overflow-hidden bg-[#8aa2cc] text-[10px] leading-3 [writing-mode:sideways-lr]">终端</div>
      </div>
      <div className="flex min-w-0 flex-1 flex-col pr-[3px]">
        <div className="flex min-h-0 flex-1 border-t border-gray-500">
          <History />
          <ScrollBar thumb="mt-[200px] h-[314px]" />
        </div>
        <div className="h-1.5 shrink-0 bg-white" />
        <nav className="flex h-[17px] shrink-0 text-[11px] leading-[17px] text-gray-500">
          {terminalTabs.map((tab) =>
            tab.name === "账户历史" ? (
              <button key={tab.name} type="button" className="border-x border-black bg-white px-2 text-black">
                {tab.name}
              </button>
            ) : (
              <div key={tab.name} className="border-t border-black pt-0.5">
                <button type="button" className="flex h-3 items-center border-r border-gray-500 px-[9px]">
                  {tab.name}
                  {tab.count && <span className="pt-2 text-[9px] font-bold text-red-600">{tab.count}</span>}
                </button>
              </div>
            )
          )}
          <div className="flex-1 border-t border-black" />
        </nav>
      </div>
    </section>
  );
}

// diagonal brand stamp repeated over the whole page
function Watermark() {
  const spots = [[112, 143], [720, 143], [112, 494], [720, 494], [112, 838], [720, 838]];
  return (
    <svg className="pointer-events-none absolute inset-0 h-full w-full" aria-hidden="true">
      {spots.map(([x, y]) => (
        <g key={x + "-" + y} transform={`translate(${x} ${y}) rotate(-9)`} opacity=".13">
          <rect x="-2" y="12" width="72" height="72" rx="9" fill="#f5c400" />
          <circle cx="33" cy="48" r="25" fill="none" stroke="#6a5578" strokeWidth="6" />
          <path d="M10 40C18 24 40 20 54 34l-6 2 8 6c-10-3-16 0-18 6 6 0 10 3 10 8-6-3-10-1-12 4 8 0 14 0 20-6-4 12-14 18-24 17-16-1-24-16-22-31z" fill="#6a5578" />
          <text x="95" y="66" fontSize="66" fontWeight="700" fill="#6d3a30">WikiFX</text>
        </g>
      ))}
    </svg>
  );
}

function DesktopEdge() {
  return (
    <aside className="flex w-[5px] shrink-0 flex-col overflow-hidden bg-white text-[12px] leading-4">
      <div className="h-0.5 bg-[#123a5c]" />
      <div className="h-10 bg-[#0f9df0]" />
      <div className="h-9 rounded-l-full border-l-2 border-orange-400 bg-[#f3e9dc]" />
      <div className="h-[74px] bg-[#0f9df0]" />
      <div className="h-7 bg-[#a9b7b8]" />
      <div className="h-[148px] bg-[#0f9df0]" />
      <div className="h-10 bg-[#e8e8e8]" />
      <div className="h-9 bg-white" />
      <div className="h-[57px] bg-[#1c1a1a]" />
      <div className="h-14 bg-[#8a8a8a]" />
      <div className="h-28" />
      <div>3.</div>
    </aside>
  );
}

export default function App() {
  return (
    <div className="relative flex h-screen min-h-[907px] gap-1 overflow-hidden bg-white font-['Noto_Sans','Noto_Sans_CJK_SC',sans-serif] text-black">
      <DesktopEdge />
      <main className="mt-[14px] flex min-w-0 flex-1 flex-col border-t border-r-2 border-l-[3px] border-t-[#2d6a8c] border-r-[#1c5fa8] border-l-[#2287c4]">
        <header className="flex h-[27px] shrink-0 items-center gap-1 bg-white pl-1.5 text-gray-400">
          <svg width="15" height="15" viewBox="0 0 15 15" fill="none">
            <rect width="15" height="15" fill="#12523a" />
            <path d="M11.500 3.500h-8v8.500M6 6.500h5.500M6 9h5v2.500H6z" stroke="#fff" strokeWidth="1.200" />
          </svg>
          <h1 className="flex-1 text-[12px]">301756: Mohicans-Live - Mohicans Markets Limited - USDCAD,M1</h1>
          <div className="flex gap-[30px] pr-[13px] text-gray-500">
            <button type="button" aria-label="最小化"><Minus size={12} strokeWidth={1.5} /></button>
            <button type="button" aria-label="最大化">
              <svg width="12" height="12" viewBox="0 0 12 12" fill="none">
                <path d="M1.500 1.500h9v9h-9z" stroke="currentColor" />
              </svg>
            </button>
            <button type="button" aria-label="关闭"><X size={14} strokeWidth={1.5} /></button>
          </div>
        </header>
        <nav className="flex h-[19px] shrink-0 items-center gap-[17px] border-b border-gray-400 bg-[#f0f0f0] pl-1.5 text-[11px] text-gray-400">
          {menus.map((m) => (
            <button key={m} type="button">{m}</button>
          ))}
        </nav>
        <Toolbars />
        <div className="flex h-[230px] shrink-0 bg-[#f0f0f0]">
          <div className="flex w-[213px] shrink-0 flex-col gap-[3px] pr-1 pl-0.5">
            <MarketWatch />
            <Navigator />
          </div>
          <div className="flex min-w-0 flex-1 flex-col border-l border-gray-500">
            <div className="flex h-[210px] shrink-0 overflow-hidden border-t-2 border-[#5c5c60] bg-[#ababab]">
              {charts.map((chart) => (
                <ChartWindow key={chart.name} chart={chart} />
              ))}
            </div>
            <nav className="flex h-5 items-start pt-[3px] text-[11px] leading-4 text-gray-500">
              {chartTabs.map((tab) => (
                <button
                  key={tab}
                  type="button"
                  className={clsx(
                    tab === "USDCAD,M1"
                      ? "h-[17px] border-x border-b-2 border-black bg-white px-[11px] text-black"
                      : "h-4 border-r border-gray-500 px-[11px]"
                  )}
                >
                  {tab}
                </button>
              ))}
              <div className="ml-auto flex gap-2 pt-0.5 pr-1">
                <ChevronLeft size={9} strokeWidth={3} />
                <ChevronRight size={9} strokeWidth={3} />
              </div>
            </nav>
          </div>
        </div>
        <div className="h-1 shrink-0 bg-[#f0f0f0]" />
        <Terminal />
      </main>
      <div className="ml-px w-[2px] shrink-0 bg-[#0a84e8]" />
      <Watermark />
      <button
        type="button"
        aria-label="下一张"
        className="absolute top-[455px] right-[26px] flex h-9 w-9 items-center justify-center rounded-full bg-[#555]/65 text-gray-200"
      >
        <ChevronRight size={18} strokeWidth={1.5} />
      </button>
    </div>
  );
}
